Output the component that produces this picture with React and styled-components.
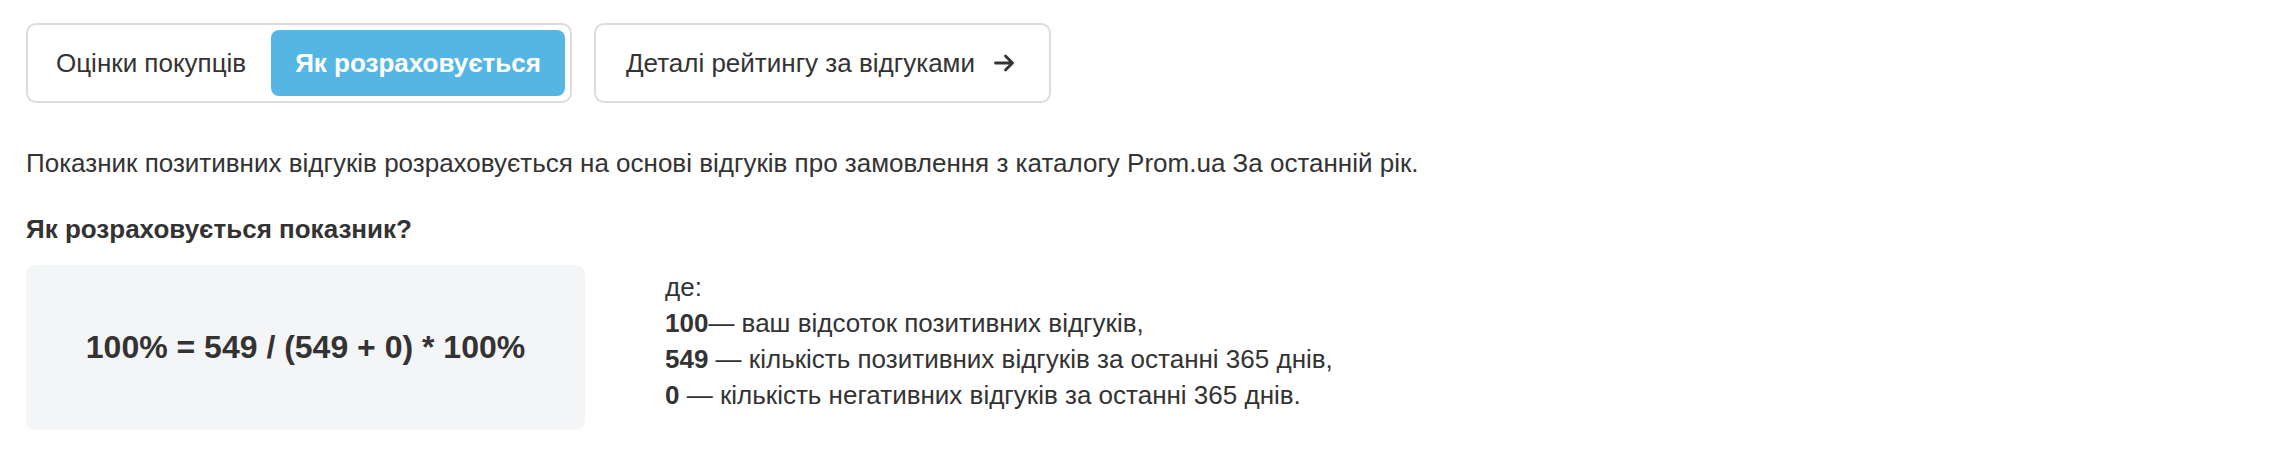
import React from "react";
import styled, { createGlobalStyle } from "styled-components";

const Global = createGlobalStyle`
  html, body { margin: 0; padding: 0; background: #ffffff; }
  body { font-family: "Liberation Sans", Arial, sans-serif; color: #333333; }
  * { box-sizing: border-box; }
`;

const Page = styled.div`
  padding: 23px 26px 0 26px;
`;

const Toolbar = styled.div`
  display: flex;
  align-items: stretch;
  gap: 22px;
`;

const Segmented = styled.div`
  display: inline-flex;
  align-items: center;
  height: 80px;
  padding: 5px;
  border: 2px solid #dcdcdc;
  border-radius: 10px;
  background: #fff;
`;

const Tab = styled.button`
  height: 66px;
  padding: ${(p) => (p.$active ? "0 24px" : "0 25px 0 23px")};
  border: none;
  border-radius: 8px;
  font-family: inherit;
  font-size: 26px;
  font-weight: ${(p) => (p.$active ? 700 : 400)};
  color: ${(p) => (p.$active ? "#ffffff" : "#333333")};
  background: ${(p) => (p.$active ? "#56b6e3" : "transparent")};
  cursor: pointer;
`;

const LinkButton = styled.button`
  display: inline-flex;
  align-items: center;
  gap: 19px;
  height: 80px;
  padding: 0 34px 0 30px;
  border: 2px solid #dcdcdc;
  border-radius: 10px;
  background: #fff;
  font-family: inherit;
  font-size: 26px;
  color: #333333;
  cursor: pointer;
`;

const Paragraph = styled.p`
  margin: 42px 0 0 0;
  font-size: 26px;
  line-height: 36px;
`;

const Heading = styled.h3`
  margin: 30px 0 0 0;
  font-size: 26px;
  line-height: 36px;
  font-weight: 700;
`;

const FormulaRow = styled.div`
  display: flex;
  gap: 80px;
  margin-top: 18px;
`;

const FormulaBox = styled.div`
  width: 559px;
  height: 165px;
  display: flex;
  align-items: center;
  justify-content: center;
  background: #f4f5f7;
  border-radius: 9px;
  font-size: 32px;
  font-weight: 700;
`;

const Legend = styled.div`
  margin-top: 4px;
  font-size: 26px;
  line-height: 36px;
`;

const LegendLine = styled.div``;

const Num = styled.b`
  font-weight: 700;
`;

const Arrow = () => (
  <svg width="21" height="20" viewBox="0 0 21 20" fill="none">
    <path
      d="M1.5 10h17M11.5 3 18.5 10l-7 7"
      stroke="#333"
      strokeWidth="2.8"
      strokeLinecap="round"
      strokeLinejoin="round"
    />
  </svg>
);

export default function App() {
  return (
    <Page>
      <Global />
      <Toolbar>
        <Segmented>
          <Tab>Оцінки покупців</Tab>
          <Tab $active>Як розраховується</Tab>
        </Segmented>
        <LinkButton>
          Деталі рейтингу за відгуками
          <Arrow />
        </LinkButton>
      </Toolbar>
      <Paragraph>
        Показник позитивних відгуків розраховується на основі відгуків про
        замовлення з каталогу Prom.ua За останній рік.
      </Paragraph>
      <Heading>Як розраховується показник?</Heading>
      <FormulaRow>
        <FormulaBox>100% = 549 / (549 + 0) * 100%</FormulaBox>
        <Legend>
          <LegendLine>де:</LegendLine>
          <LegendLine>
            <Num>100</Num>— ваш відсоток позитивних відгуків,
          </LegendLine>
          <LegendLine>
            <Num>549</Num> — кількість позитивних відгуків за останні 365 днів,
          </LegendLine>
          <LegendLine>
            <Num>0</Num> — кількість негативних відгуків за останні 365 днів.
          </LegendLine>
        </Legend>
      </FormulaRow>
    </Page>
  );
}
